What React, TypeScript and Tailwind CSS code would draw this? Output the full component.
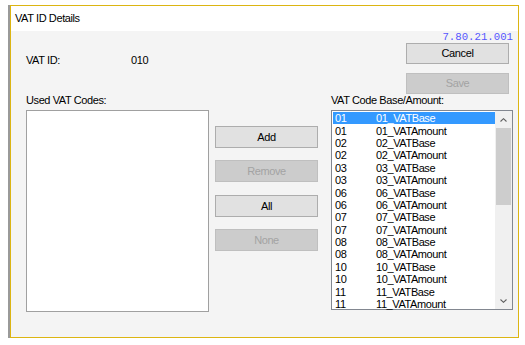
const rows: [string, string][] = [
  ['01', '01_VATBase'],
  ['01', '01_VATAmount'],
  ['02', '02_VATBase'],
  ['02', '02_VATAmount'],
  ['03', '03_VATBase'],
  ['03', '03_VATAmount'],
  ['06', '06_VATBase'],
  ['06', '06_VATAmount'],
  ['07', '07_VATBase'],
  ['07', '07_VATAmount'],
  ['08', '08_VATBase'],
  ['08', '08_VATAmount'],
  ['10', '10_VATBase'],
  ['10', '10_VATAmount'],
  ['11', '11_VATBase'],
  ['11', '11_VATAmount'],
];

function WinButton({ label, disabled = false, className = '' }: { label: string; disabled?: boolean; className?: string }) {
  return (
    <div
      className={`flex w-[103px] items-center justify-center border ${
        disabled ? 'border-[#bfbfbf] bg-[#cccccc] text-[#a3a3a3]' : 'border-[#adadad] bg-[#e1e1e1] text-black'
      } ${className}`}
    >
      {label}
    </div>
  );
}

function Chevron({ up }: { up?: boolean }) {
  return (
    <svg width="7" height="4" viewBox="0 0 7 4">
      <polyline
        points={up ? '0.5,3.5 3.5,0.7 6.5,3.5' : '0.5,0.5 3.5,3.3 6.5,0.5'}
        fill="none"
        stroke="#606060"
        strokeWidth="1.1"
      />
    </svg>
  );
}

export default function App() {
  return (
    <div
      className="h-[345px] w-[525px] bg-white pl-[8px] pt-[5px] text-[11px] leading-[13px] tracking-[-0.4px] text-black"
      style={{ fontFamily: '"Liberation Sans", Arial, sans-serif' }}
    >
      <div className="w-[511px] border-l-2 border-[#9a9a9a]">
        <div className="border border-[#dcb512]">
          <div className="flex h-[25px] items-center bg-white pl-[4px] text-[11px]">VAT ID Details</div>

          <div className="h-[306px] bg-[#f4f4f4] pl-[15px] pr-[5px]">
            <div className="flex h-[63px]">
              <div className="flex flex-1 pt-[23px]">
                <span className="w-[105px]">VAT ID:</span>
                <span>010</span>
              </div>
              <div className="flex flex-col items-end">
                <div
                  className="h-[12px] text-[10.7px] leading-[12px] tracking-normal text-[#5656ff]"
                  style={{ fontFamily: '"Liberation Mono", "Courier New", monospace' }}
                >
                  7.80.21.001
                </div>
                <WinButton label="Cancel" className="mr-[4px] h-[21px]" />
                <WinButton label="Save" disabled className="mr-[4px] mt-[9px] h-[21px]" />
              </div>
            </div>

            <div className="flex">
              <div className="flex w-[183px] flex-col">
                <div className="h-[16px]">Used VAT Codes:</div>
                <div className="h-[202px] border border-[#a0a0a0] bg-white" />
              </div>

              <div className="ml-[6px] flex flex-col pt-[32px]">
                <WinButton label="Add" className="h-[22px]" />
                <WinButton label="Remove" disabled className="mt-[12px] h-[22px]" />
                <WinButton label="All" className="mt-[13px] h-[22px]" />
                <WinButton label="None" disabled className="mt-[12px] h-[22px]" />
              </div>

              <div className="ml-[13px] flex w-[182px] flex-col">
                <div className="h-[16px]">VAT Code Base/Amount:</div>
                <div className="flex h-[200px] border border-[#828790] bg-white">
                  <div className="flex-1 pl-[1px] pt-[1px]">
                    {rows.map(([code, name], i) => (
                      <div
                        key={name}
                        className={`flex h-[12.4px] items-center pl-[2px] leading-[12px] ${
                          i === 0 ? 'bg-[#3399ff] text-white' : 'text-black'
                        }`}
                      >
                        <span className="w-[41px]">{code}</span>
                        <span>{name}</span>
                      </div>
                    ))}
                  </div>
                  <div className="flex w-[17px] flex-col bg-[#f0f0f0]">
                    <div className="flex h-[17px] items-center justify-center">
                      <Chevron up />
                    </div>
                    <div className="mx-[1px] h-[77px] bg-[#cdcdcd]" />
                    <div className="flex-1" />
                    <div className="flex h-[17px] items-center justify-center">
                      <Chevron />
                    </div>
                  </div>
                </div>
              </div>
            </div>
          </div>
        </div>
      </div>
    </div>
  );
}
